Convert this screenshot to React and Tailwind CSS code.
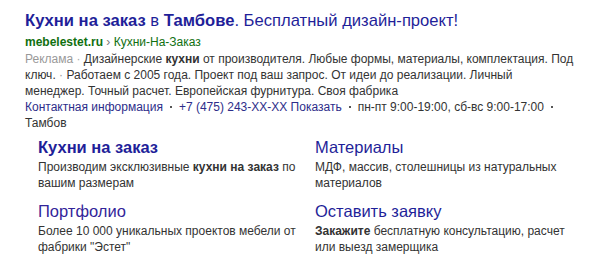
function Dot() {
  return <span className="inline-block w-[2px] h-[2px] bg-[#555] align-middle mx-[7px] mb-[2px]" />;
}

export default function App() {
  const font = { fontFamily: '"Liberation Sans", Arial, sans-serif' };
  return (
    <div className="w-[600px] h-[262px] bg-white overflow-hidden" style={font}>
      <div className="pl-[25px] pt-[11px] w-[575px]">
        <div className="text-[16.6px] leading-[20px] text-[#1f1f99] whitespace-nowrap">
          <span className="font-bold">Кухни на заказ</span> в <span className="font-bold">Тамбове</span>. Бесплатный дизайн-проект!
        </div>
        <div className="mt-[3px] text-[12px] leading-[16px] whitespace-nowrap">
          <span className="font-bold text-[#107010]">mebelestet.ru</span>
          <span className="text-[#777]"> › </span>
          <span className="text-[#107010]">Кухни-На-Заказ</span>
        </div>
        <div className="mt-[1px] text-[12px] leading-[16px] text-[#333] whitespace-nowrap">
          <span className="text-[#999]">Реклама</span> <span className="text-[#aaa]">·</span> Дизайнерские <span className="font-bold">кухни</span> от производителя. Любые формы, материалы, комплектация. Под
          <br />
          ключ. <span className="text-[#999]">·</span> Работаем с 2005 года. Проект под ваш запрос. От идеи до реализации. Личный
          <br />
          менеджер. Точный расчет. Европейская фурнитура. Своя фабрика
        </div>
        <div className="text-[12px] leading-[16px] text-[#333] whitespace-nowrap">
          <span className="text-[#2d2d8a]">Контактная информация</span>
          <Dot />
          <span className="text-[#2d2d8a]">+7 (475) 243-XX-XX Показать</span>
          <Dot />
          пн-пт 9:00-19:00, сб-вс 9:00-17:00
          <Dot />
          <br />
          Тамбов
        </div>
        <div className="mt-[6px] pl-[13px] grid grid-cols-[277px_260px] gap-y-[10px]">
          <div>
            <div className="text-[16.5px] leading-[20px] font-bold text-[#1f1f99]">Кухни на заказ</div>
            <div className="mt-[2px] text-[12px] leading-[16px] text-[#333] whitespace-nowrap">
              Производим эксклюзивные <span className="font-bold">кухни на заказ</span> по
              <br />
              вашим размерам
            </div>
          </div>
          <div>
            <div className="text-[16.5px] leading-[20px] text-[#1f1f99]">Материалы</div>
            <div className="mt-[2px] text-[12px] leading-[16px] text-[#333] whitespace-nowrap">
              МДФ, массив, столешницы из натуральных
              <br />
              материалов
            </div>
          </div>
          <div>
            <div className="text-[16.5px] leading-[20px] text-[#33259a]">Портфолио</div>
            <div className="mt-[2px] text-[12px] leading-[16px] text-[#333] whitespace-nowrap">
              Более 10 000 уникальных проектов мебели от
              <br />
              фабрики "Эстет"
            </div>
          </div>
          <div>
            <div className="text-[16.5px] leading-[20px] text-[#1f1f99]">Оставить заявку</div>
            <div className="mt-[2px] text-[12px] leading-[16px] text-[#333] whitespace-nowrap">
              <span className="font-bold">Закажите</span> бесплатную консультацию, расчет
              <br />
              или выезд замерщика
            </div>
          </div>
        </div>
      </div>
    </div>
  );
}
